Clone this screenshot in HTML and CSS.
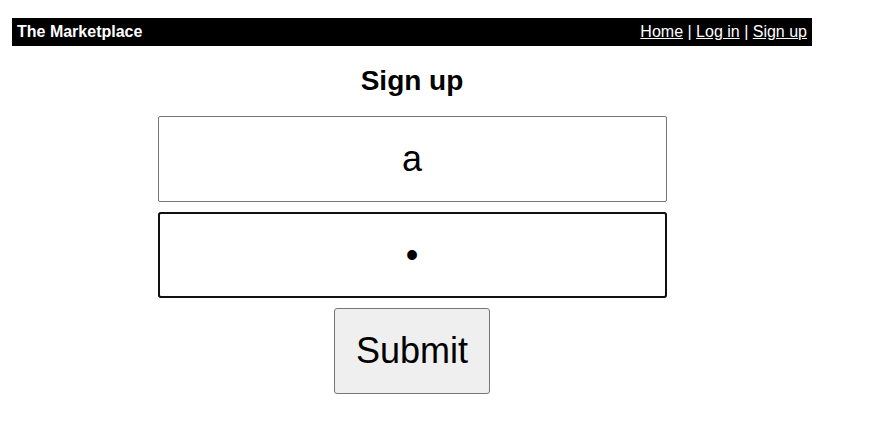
FILE: index.html
```html
<!DOCTYPE html>
<html>
<head>
<meta charset="utf-8">
<title>Sign up</title>
<link rel="stylesheet" href="styles.css">
</head>
<body>
<div class="page">
  <header class="topbar">
    <span class="brand">The Marketplace</span>
    <nav class="nav"><a href="#">Home</a> | <a href="#">Log in</a> | <a href="#">Sign up</a></nav>
  </header>
  <h1 class="title">Sign up</h1>
  <form class="form">
    <input class="field" type="text" value="a">
    <input class="field focused" type="password" value="a">
    <button class="submit" type="button">Submit</button>
  </form>
</div>
</body>
</html>
```
FILE: styles.css
```css
html, body {
  margin: 0;
  padding: 0;
  background: #fff;
}
body {
  font-family: "Liberation Sans", Arial, sans-serif;
  color: #000;
}
.page {
  width: 800px;
  padding: 18px 12px;
}
.topbar {
  display: flex;
  justify-content: space-between;
  align-items: center;
  background: #000;
  color: #fff;
  font-size: 16px;
  line-height: 18px;
  padding: 5px;
}
.brand {
  font-weight: bold;
}
.nav a {
  color: #fff;
  text-decoration: underline;
}
.title {
  text-align: center;
  font-size: 28px;
  font-weight: bold;
  line-height: 32px;
  margin: 19px 0;
}
.form {
  display: flex;
  flex-direction: column;
  align-items: center;
  gap: 10px;
}
.field {
  box-sizing: border-box;
  width: 509px;
  height: 86px;
  border: 1px solid #767676;
  border-radius: 2px;
  font-family: "Liberation Sans", Arial, sans-serif;
  font-size: 36px;
  text-align: center;
  padding: 0;
  margin: 0;
  color: #000;
  background: #fff;
}
.focused {
  outline: 2px solid #101010;
  outline-offset: -2px;
  border-radius: 3px;
}
.submit {
  box-sizing: border-box;
  height: 86px;
  padding: 0 21px;
  border: 1px solid #767676;
  border-radius: 3px;
  background: #efefef;
  font-family: "Liberation Sans", Arial, sans-serif;
  font-size: 36px;
  color: #000;
  margin: 0;
}
```
